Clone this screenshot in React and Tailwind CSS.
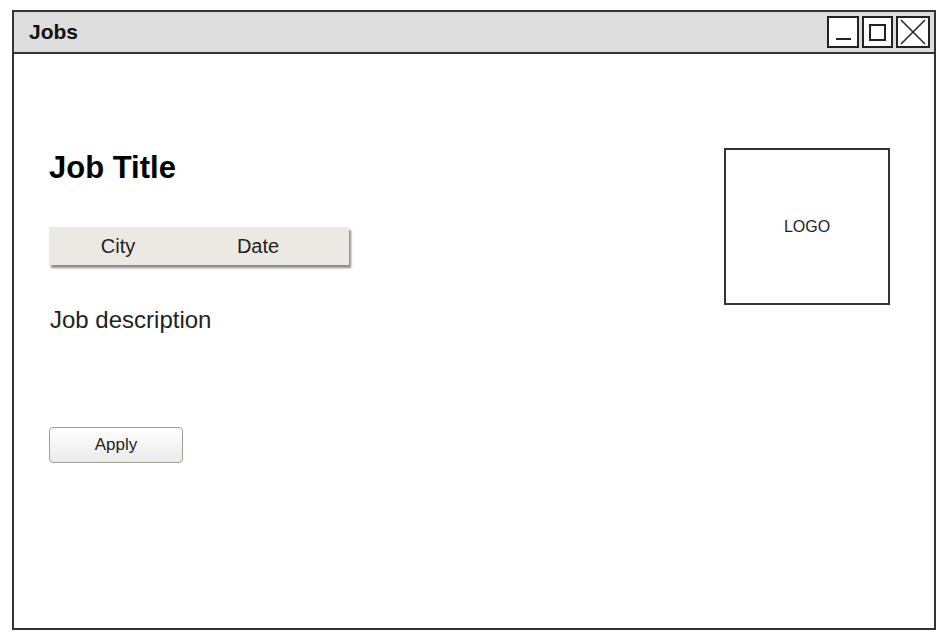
export default function App() {
  return (
    <div className="w-[939px] h-[637px] bg-white pt-[10px] pl-[12px]" style={{ fontFamily: '"Liberation Sans", Arial, sans-serif' }}>
      <div className="w-[924px] h-[620px] border-2 border-[#333] flex flex-col">
        {/* Title bar */}
        <div className="h-[42px] bg-[#dddddd] border-b-2 border-[#333] flex items-center pl-[15px] pr-[4px]">
          <span className="text-[21px] font-bold text-[#111]">Jobs</span>
          <div className="ml-auto flex gap-[3px]">
            <div className="w-[32px] h-[32px] border-2 border-[#222] bg-white flex items-end justify-center pb-[6px]">
              <div className="w-[15px] h-[2px] bg-[#222]" />
            </div>
            <div className="w-[31px] h-[32px] border-2 border-[#222] bg-white flex items-center justify-center">
              <div className="w-[17px] h-[17px] border-2 border-[#222]" />
            </div>
            <div className="w-[34px] h-[32px] border-2 border-[#222] bg-white flex items-center justify-center">
              <svg width="28" height="28" viewBox="0 0 28 28">
                <path d="M2 2 L26 26 M26 2 L2 26" stroke="#222" strokeWidth="1.5" />
              </svg>
            </div>
          </div>
        </div>

        {/* Content */}
        <div className="flex-1 flex pl-[35px] pr-[44px]">
          <div className="flex-1 flex flex-col pt-[98px]">
            <h1 className="text-[31px] font-bold leading-none text-black">Job Title</h1>
            <div className="mt-[44px] w-[300px] h-[38px] bg-[#ece9e3] shadow-[2px_3px_2px_rgba(0,0,0,0.45)] flex items-center text-[20px] text-[#222]">
              <div className="w-[138px] text-center">City</div>
              <div className="w-[142px] text-center">Date</div>
            </div>
            <p className="mt-[43px] ml-[1px] text-[24px] text-[#222] leading-none">Job description</p>
            <button className="mt-[95px] w-[134px] h-[36px] rounded-[4px] border border-[#a49e93] bg-gradient-to-b from-white to-[#eaeaea] text-[17px] text-[#222]">
              Apply
            </button>
          </div>
          <div className="pt-[94px]">
            <div className="w-[166px] h-[157px] border-2 border-[#333] flex items-center justify-center">
              <span className="text-[16px] text-[#222]">LOGO</span>
            </div>
          </div>
        </div>
      </div>
    </div>
  );
}
